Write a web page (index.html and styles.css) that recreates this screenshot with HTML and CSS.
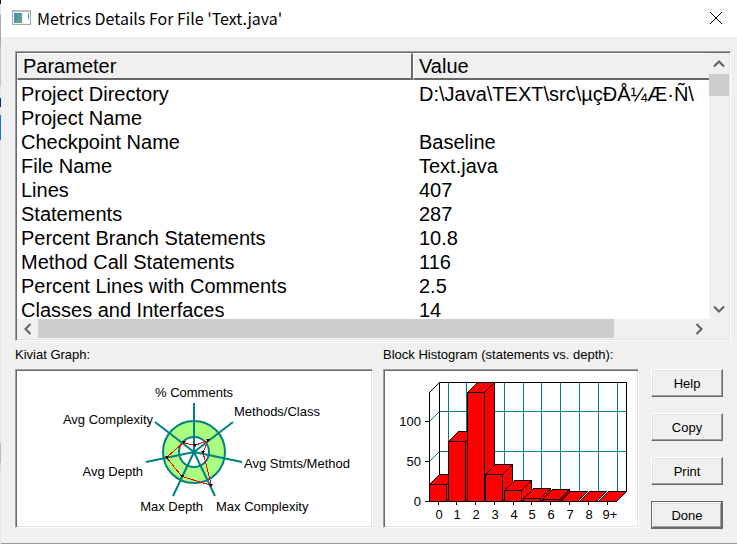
FILE: index.html
```html
<!DOCTYPE html>
<html lang="en">
  <head>
    <meta charset="utf-8">
    <title>Metrics Details For File 'Text.java'</title>
    <link rel="stylesheet" href="styles.css">
  </head>
  <body>
    <main class="dialog">
      <header class="titlebar">
        <svg class="app-icon" width="20" height="18" viewBox="0 0 20 18" aria-hidden="true">
          <defs>
            <linearGradient id="pane" x1="0" y1="0" x2="1" y2="1">
              <stop offset="0" stop-color="#4a86b4"/>
              <stop offset="1" stop-color="#62b37c"/>
            </linearGradient>
          </defs>
          <rect x="0.5" y="1.5" width="18" height="14" fill="#f4f6f7" stroke="#a5a9ae"/>
          <rect x="1" y="1" width="17" height="2" fill="#b9bdc2"/>
          <rect x="2" y="4" width="8" height="10" fill="url(#pane)"/>
          <rect x="11" y="4" width="7" height="10" fill="#fff"/>
          <rect x="16" y="4" width="1" height="6" fill="#58a596"/>
        </svg>
        <h1>Metrics Details For File 'Text.java'</h1>
        <button class="close" aria-label="Close">
          <svg width="14" height="14" viewBox="0 0 14 14"><path d="M1 1L13 13M13 1L1 13" fill="none" stroke="#000"/></svg>
        </button>
      </header>

      <section class="list">
        <div class="rows">
          <table>
            <colgroup><col class="param"><col></colgroup>
            <thead>
              <tr><th>Parameter</th><th>Value</th></tr>
            </thead>
            <tbody>
              <tr><td>Project Directory</td><td>D:\Java\TEXT\src\µçÐÅ¼Æ·Ñ\</td></tr>
              <tr><td>Project Name</td><td></td></tr>
              <tr><td>Checkpoint Name</td><td>Baseline</td></tr>
              <tr><td>File Name</td><td>Text.java</td></tr>
              <tr><td>Lines</td><td>407</td></tr>
              <tr><td>Statements</td><td>287</td></tr>
              <tr><td>Percent Branch Statements</td><td>10.8</td></tr>
              <tr><td>Method Call Statements</td><td>116</td></tr>
              <tr><td>Percent Lines with Comments</td><td>2.5</td></tr>
              <tr><td>Classes and Interfaces</td><td>14</td></tr>
            </tbody>
          </table>
        </div>
        <div class="vscroll">
          <button aria-label="Scroll up"><svg width="12" height="8" viewBox="0 0 12 8"><path d="M1 6.500L6 1.500L11 6.500"/></svg></button>
          <div class="vthumb"></div>
          <button aria-label="Scroll down"><svg width="12" height="8" viewBox="0 0 12 8"><path d="M1 1.500L6 6.500L11 1.500"/></svg></button>
        </div>
        <div class="hscroll">
          <button aria-label="Scroll left"><svg width="8" height="12" viewBox="0 0 8 12"><path d="M6.500 1L1.500 6L6.500 11"/></svg></button>
          <div class="htrack"><div class="hthumb"></div></div>
          <button aria-label="Scroll right"><svg width="8" height="12" viewBox="0 0 8 12"><path d="M1.500 1L6.500 6L1.500 11"/></svg></button>
        </div>
      </section>

      <div class="charts">
        <figure class="kiviat">
          <figcaption>Kiviat Graph:</figcaption>
          <div class="panel">
            <svg width="354" height="155" viewBox="0 0 354 155">
              <g fill="none" stroke="#008080" stroke-width="2">
                <circle cx="177" cy="81" r="31" fill="#aaff80"/>
                <circle cx="177" cy="81" r="15" fill="#fff"/>
                <path d="M177 81V32M177 81L216 51M177 81L225 91M177 81L198 125M177 81L156 125M177 81L129 91M177 81L138 51"/>
              </g>
              <path d="M177.500 74.500L191 69.500L186 81.500L194.500 114.500L165 105.500L149.500 86.500L166.500 71.500Z" fill="none" stroke="#f00" shape-rendering="crispEdges"/>
              <path d="M176 73h4l-2 3zM189 68h4l-2 3zM184 80h4l-2 3zM192 113h4l-2 3zM163 104h4l-2 3zM148 85h4l-2 3zM165 70h4l-2 3z"/>
              <text x="177" y="26" text-anchor="middle">% Comments</text>
              <text x="217" y="45">Methods/Class</text>
              <text x="227" y="97">Avg Stmts/Method</text>
              <text x="199" y="140">Max Complexity</text>
              <text x="186" y="140" text-anchor="end">Max Depth</text>
              <text x="126" y="105" text-anchor="end">Avg Depth</text>
              <text x="136" y="53" text-anchor="end">Avg Complexity</text>
            </svg>
          </div>
        </figure>

        <figure class="histogram">
          <figcaption>Block Histogram (statements vs. depth):</figcaption>
          <div class="panel">
            <svg width="252" height="155" viewBox="0 0 252 155">
              <g shape-rendering="crispEdges">
                <!-- back wall grid -->
                <path d="M63.500 11.500V120M81.500 11.500V120M119.500 11.500V120M138.500 11.500V120M156.500 11.500V120M175.500 11.500V120M194.500 11.500V120M213.500 11.500V120M232.500 11.500V120M44.500 50.500L54.500 40.500H241M44.500 90.500L54.500 80.500H241" fill="none" stroke="#008080"/>
                <path d="M54.500 120V11.500H241.500V120.500M54.500 11.500L44.500 21.500V130.500M40 50.500h4M40 90.500h4M40 130.500H232M53.500 131v3M71.500 131v3M90.500 131v3M109.500 131v3M128.500 131v3M146.500 131v3M165.500 131v3M184.500 131v3M203.500 131v3M222.500 131v3" fill="none" stroke="#000"/>
                <!-- bars: outline, then the front and side edges -->
                <g fill="#f00" stroke="#000">
                  <path d="M44.500 130.500V113.500l10 -10h17V120.500l-10 10zM44.500 113.500h17V130.500M61.500 113.500l10 -10"/>
                  <path d="M63.500 130.500V70.500l10 -10h17V120.500l-10 10zM63.500 70.500h17V130.500M80.500 70.500l10 -10"/>
                  <path d="M82.500 130.500V21.500l10 -10h17V120.500l-10 10zM82.500 21.500h17V130.500M99.500 21.500l10 -10"/>
                  <path d="M100.500 130.500V103.500l10 -10h17V120.500l-10 10zM100.500 103.500h17V130.500M117.500 103.500l10 -10"/>
                  <path d="M119.500 130.500V119.500l10 -10h17V120.500l-10 10zM119.500 119.500h17V130.500M136.500 119.500l10 -10"/>
                  <path d="M138.500 130.500V127.500l10 -10h17V120.500l-10 10zM138.500 127.500h17V130.500M155.500 127.500l10 -10"/>
                  <path d="M157.500 130.500V128.500l10 -10h17V120.500l-10 10zM157.500 128.500h17V130.500M174.500 128.500l10 -10"/>
                  <path d="M175.500 130.500l10 -10h17l-10 10z"/>
                  <path d="M194.500 130.500l10 -10h17l-10 10z"/>
                  <path d="M213.500 130.500l10 -10h18l-10 10z"/>
                </g>
              </g>
              <g text-anchor="end">
                <text x="36" y="55">100</text>
                <text x="36" y="95">50</text>
                <text x="36" y="135">0</text>
              </g>
              <g text-anchor="middle">
                <text x="54" y="148">0</text>
                <text x="72" y="148">1</text>
                <text x="91" y="148">2</text>
                <text x="110" y="148">3</text>
                <text x="129" y="148">4</text>
                <text x="147" y="148">5</text>
                <text x="166" y="148">6</text>
                <text x="185" y="148">7</text>
                <text x="204" y="148">8</text>
                <text x="225" y="148">9+</text>
              </g>
            </svg>
          </div>
        </figure>

        <div class="actions">
          <button>Help</button>
          <button>Copy</button>
          <button>Print</button>
          <button class="default">Done</button>
        </div>
      </div>
    </main>
  </body>
</html>
```
FILE: styles.css
```css
* { box-sizing: border-box; }

/* a sliver of the window behind shows left of the dialog */
body
{
  margin: 0;
  background: linear-gradient(#111 4px, #e4e4e4 4px 15px, #a8a8a8 15px 47px, #b8c8e0 47px 86px, #e4e4e4 86px 98px,
                              #003080 98px 107px, #e4e4e4 107px 115px, #1878d0 115px 140px, #e4e4e4 140px 443px,
                              #b8b8b8 443px 463px, #d0e0f4 463px 473px, #e4e4e4 473px) no-repeat;
  font-family: "Liberation Sans", Arial, sans-serif;
  font-size: 13px;
  color: #000;
}

button
{
  font: inherit;
  color: inherit;
  padding: 0;
}

.dialog
{
  display: flex;
  flex-direction: column;
  min-height: 100vh;
  margin-left: 1px;
  background: #f0f0f0;
  border-bottom: 1px solid #999;
}

.titlebar
{
  display: flex;
  align-items: center;
  height: 37px;
  padding: 0 14px 2px 11px;
  background: #fff;
}

.titlebar h1
{
  flex: 1;
  margin: 0 0 0 5px;
  font: 16px/24px "Noto Sans CJK SC", "Noto Sans", sans-serif;
}

.close
{
  display: flex;
  border: 0;
  background: none;
}

/* sunken frames */
.list, .panel
{
  padding: 1px;
  border: 1px solid;
  border-color: #a0a0a0 #fff #fff #a0a0a0;
  box-shadow: inset 1px 1px #696969, inset -1px -1px #e3e3e3;
}

.list
{
  display: grid;
  grid-template-columns: minmax(0, 1fr) 20px;
  grid-template-rows: 266px 20px;
  margin: 14px 6px 0 14px;
  background: #f0f0f0;
}

.rows
{
  overflow: hidden;
  background: #fff;
}

table
{
  width: 100%;
  table-layout: fixed;
  border-collapse: separate;
  border-spacing: 0;
  font-size: 20px;
  line-height: 24px;
  white-space: nowrap;
}

.param { width: 396px; }

th
{
  height: 27px;
  padding: 1px 5px 0;
  line-height: 23px;
  text-align: left;
  font-weight: normal;
  background: #f0f0f0;
  border: solid;
  border-width: 1px 2px 2px 1px;
  border-color: #fff #696969 #696969 #fff;
}

th:last-child { border-right: 0; }

td
{
  height: 24px;
  padding: 0 4px;
}

td:last-child { padding-left: 6px; }

tbody tr:first-child td
{
  height: 26px;
  padding-top: 2px;
}

.vscroll
{
  display: flex;
  flex-direction: column;
}

.vscroll button, .hscroll button
{
  display: grid;
  place-items: center;
  border: 0;
  background: none;
}

.vscroll button
{
  width: 20px;
  height: 21px;
}

.hscroll button
{
  width: 21px;
  height: 19px;
}

.vscroll button:last-child { margin-top: auto; }

.vscroll path, .hscroll path
{
  fill: none;
  stroke: #606060;
  stroke-width: 2;
}

.vthumb
{
  height: 22px;
  background: #cdcdcd;
}

.hscroll
{
  display: flex;
}

.htrack { flex: 1; }

.hthumb
{
  width: 88.6%;
  height: 19px;
  background: #cdcdcd;
}

.charts
{
  display: flex;
  padding: 6px 14px 14px;
}

figure { margin: 0; }

figcaption
{
  height: 22px;
  line-height: 16px;
  white-space: nowrap;
}

.kiviat { flex: 1; }

.histogram { margin-left: 10px; }

.panel { background: #fff; }

.panel svg
{
  display: block;
  margin: 0 auto;
}

.actions
{
  display: flex;
  flex-direction: column;
  gap: 16px;
  margin: 22px 0 0 12px;
}

.actions button
{
  width: 72px;
  height: 28px;
  background: #f0f0f0;
  border: 1px solid;
  border-color: #fff #696969 #696969 #fff;
  box-shadow: inset -1px -1px #a0a0a0, inset 1px 1px #e3e3e3;
}

.actions .default
{
  border-color: #696969;
  box-shadow: inset -1px -1px #696969, inset 1px 1px #fff, inset -2px -2px #a0a0a0, inset 2px 2px #e3e3e3;
}
```
